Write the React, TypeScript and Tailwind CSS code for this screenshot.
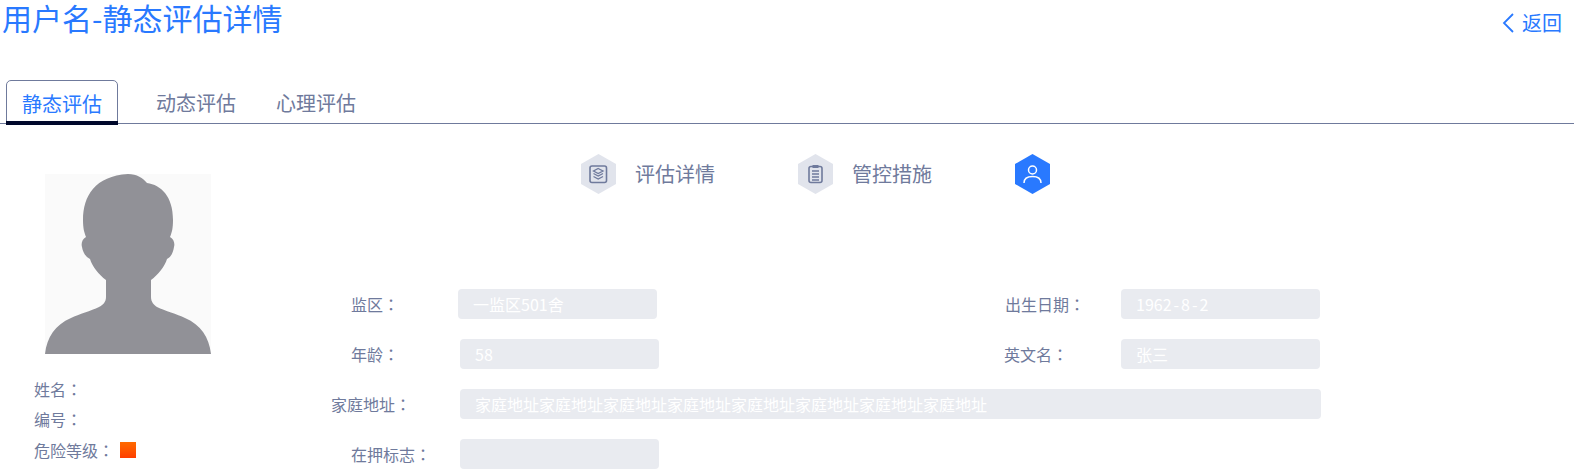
const FONT = "font-['Noto_Sans_CJK_SC','Noto_Sans',sans-serif]";

function Colon() {
  return <span className="font-['Noto_Sans_CJK_TC',sans-serif]">：</span>;
}

function Hyphen({ className }: { className: string }) {
  return <span className={className}>-</span>;
}

function Hex({ active, children }: { active?: boolean; children: React.ReactNode }) {
  return (
    <svg width="35" height="40" viewBox="0 0 35 40" className="shrink-0">
      <polygon points="17.5,0 35,10 35,30 17.5,40 0,30 0,10" fill={active ? "#2979ff" : "#e1e4ec"} />
      {children}
    </svg>
  );
}

function Step({ label, children, className }: { label?: string; children: React.ReactNode; className?: string }) {
  return (
    <div className={`flex items-center ${className ?? ""}`}>
      {children}
      {label && <span className="ml-[19px] text-[20px] leading-[28px] text-[#6f7a9c]">{label}</span>}
    </div>
  );
}

function Field({
  label,
  value,
  labelClass,
  inputClass,
}: {
  label: string;
  value?: React.ReactNode;
  labelClass: string;
  inputClass: string;
}) {
  return (
    <div className="flex items-center">
      <div className={`${labelClass} shrink-0 whitespace-pre text-[16px] text-[#6f7a9c]`}>
        {label}
        <Colon />
      </div>
      <div className={`${inputClass} flex h-[30px] items-center rounded-[4px] bg-[#e9ebf0] text-[16px] text-[#ffffff]`}>
        {value}
      </div>
    </div>
  );
}

export default function App() {
  return (
    <div className={`h-[469px] w-[1574px] overflow-hidden bg-white ${FONT}`}>
      <header className="flex items-start justify-between">
        <h1 className="ml-[2px] text-[30px] leading-[34px] font-normal text-[#2979ff]">用户名-静态评估详情</h1>
        <div className="mt-[3px] mr-[12px] flex items-center text-[20px] leading-[40px] text-[#2979ff]">
          <svg width="14" height="22" viewBox="0 0 14 22" className="mr-[7px]">
            <path d="M12 2 L3 11 L12 20" fill="none" stroke="#2979ff" strokeWidth="1.8" />
          </svg>
          返回
        </div>
      </header>

      <nav className="mt-[37px] flex h-[44px] items-stretch border-b border-[#6f7a9c] pl-[6px]">
        <div className="relative h-[45px] w-[112px] rounded-t-[5px] border border-[#6f7a9c] bg-white pt-[9px] text-center text-[20px] leading-[28px] text-[#2979ff]">
          静态评估
          <span className="absolute -right-px bottom-[-1px] -left-px h-[4px] bg-[#00082b]" />
        </div>
        <div className="ml-[38px] pt-[9px] text-[20px] leading-[28px] text-[#6f7a9c]">动态评估</div>
        <div className="ml-[40px] pt-[9px] text-[20px] leading-[28px] text-[#6f7a9c]">心理评估</div>
      </nav>

      <main className="flex">
        <aside className="w-[300px] shrink-0 pt-[50px] pl-[34px]">
          <svg width="166" height="180" viewBox="0 0 166 180" className="ml-[11px] block bg-[#fafafa]">
            <path
              d="M83 0 C92 0 98 4 102 9 C116 11 128 22 128 46 C128 54 127 58 125 63 C129 65 130 70 129 73 C128 79 126 83 122 85 C120 92 113 101 106 106 L106 123 C106 128 109 131 112 133 C120 137 132 140 140 144 C156 151 164 163 166 180 L0 180 C2 163 10 151 26 144 C34 140 46 137 54 133 C58 131 61 128 61 123 L61 106 C54 101 47 92 45 85 C41 83 38 79 37 73 C36 70 37 65 41 63 C39 58 38 54 38 46 C38 22 50 2 83 0 Z"
              fill="#919197"
            />
          </svg>
          <div className="mt-[25px] flex flex-col gap-[10px] text-[16px] leading-[20px] text-[#6f7a9c]">
            <div>姓名<Colon /></div>
            <div>编号<Colon /></div>
            <div className="mt-[1px] flex items-center">
              危险等级<Colon />
              <span className="ml-[6px] h-[16px] w-[16px] bg-gradient-to-b from-[#ff6a00] to-[#ff3d00]" />
            </div>
          </div>
        </aside>

        <section className="flex-1">
          <div className="mt-[30px] ml-[281px] flex h-[40px]">
            <Step label="评估详情" className="w-[217px]">
              <Hex>
                <rect x="9" y="12" width="16.5" height="16.5" rx="2" fill="none" stroke="#6f7a9c" strokeWidth="1.6" />
                <path d="M17.2 14.5 L22 17 L17.2 19.5 L12.5 17 Z M12.5 19.5 L17.2 22 L22 19.5 M12.5 22.5 L17.2 25 L22 22.5" fill="none" stroke="#6f7a9c" strokeWidth="1.3" />
              </Hex>
            </Step>
            <Step label="管控措施" className="w-[217px]">
              <Hex>
                <rect x="11" y="12.5" width="13" height="16" rx="2" fill="none" stroke="#6f7a9c" strokeWidth="1.6" />
                <rect x="14.5" y="11" width="6" height="3" fill="#6f7a9c" />
                <path d="M14 17 H21 M14 20 H21 M14 23 H21 M14 26 H21" stroke="#6f7a9c" strokeWidth="1.3" />
              </Hex>
            </Step>
            <Step>
              <Hex active>
                <circle cx="17.5" cy="16" r="4" fill="none" stroke="#fff" strokeWidth="1.5" />
                <path d="M9 29 C9 24 13 22.5 17.5 22.5 C22 22.5 26 24 26 29" fill="none" stroke="#fff" strokeWidth="1.5" />
              </Hex>
            </Step>
          </div>

          <div className="mt-[95px] flex flex-col gap-[20px]">
            <div className="flex">
              <Field label="监区" value="一监区501舍" labelClass="ml-[51px] w-[107px]" inputClass="w-[199px] pl-[15px]" />
              <div className="ml-[347px]">
                <Field
                  label="出生日期"
                  value={<>1962<Hyphen className="mx-[2px]" />8<Hyphen className="mx-[2px]" />2</>}
                  labelClass="ml-[1px] w-[116px]"
                  inputClass="w-[199px] pl-[15px]"
                />
              </div>
            </div>
            <div className="flex">
              <Field label="年龄" value="58" labelClass="ml-[51px] w-[109px]" inputClass="w-[199px] pl-[15px]" />
              <div className="ml-[345px]">
                <Field label="英文名" value="张三" labelClass="w-[117px]" inputClass="w-[199px] pl-[15px]" />
              </div>
            </div>
            <Field
              label="家庭地址"
              value="家庭地址家庭地址家庭地址家庭地址家庭地址家庭地址家庭地址家庭地址"
              labelClass="ml-[31px] w-[129px]"
              inputClass="w-[861px] pl-[15px]"
            />
            <Field label="在押标志" labelClass="ml-[51px] w-[109px]" inputClass="w-[199px]" />
          </div>
        </section>
      </main>
    </div>
  );
}
